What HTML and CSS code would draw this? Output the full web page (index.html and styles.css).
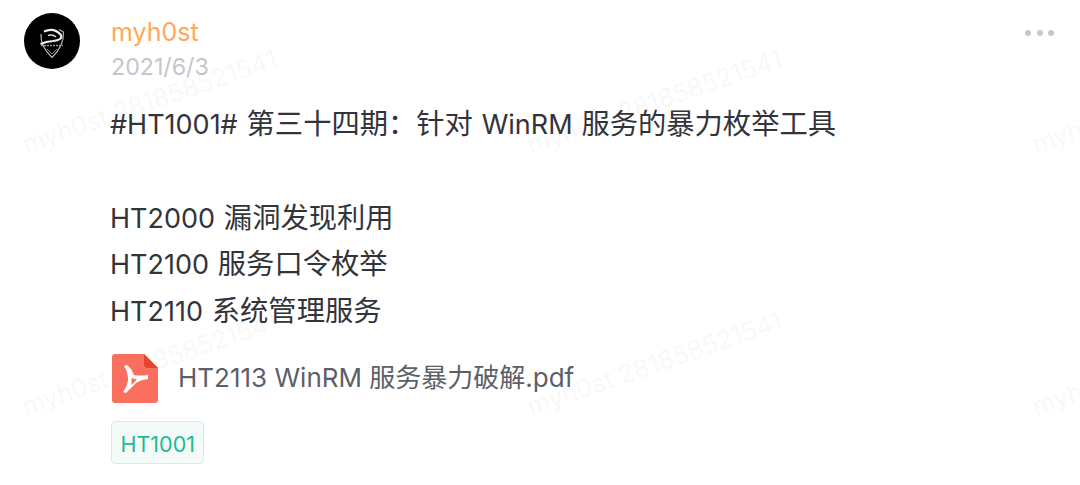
FILE: index.html
```html
<!DOCTYPE html>
<html>
<head lang="en">
    <meta charset="UTF-8">
    <title>myh0st</title>
    <link rel="stylesheet" href="styles.css">
</head>
<body>
    <div class="topic">
        <svg class="avatar" viewBox="0 0 56 56">
            <circle cx="28" cy="28" r="28" fill="#000"/>
            <path d="M17 21 Q16 33 28 44.5 Q40 33 39.5 19 L35 16.5" fill="none" stroke="#b5b5b5" stroke-width="1.2"/>
            <path d="M20 18.5 Q30 14 37 22 Q39 27 29 28 Q22 28.5 16.5 31" fill="none" stroke="#f0f0f0" stroke-width="2"/>
            <path d="M24 22.5 Q29 21 32 24" fill="none" stroke="#ddd" stroke-width="1.6"/>
            <path d="M17 32.5 H39" stroke="#999" stroke-width="1.6" stroke-dasharray="2 1"/>
            <path d="M23 36 L28 41 L33 36" fill="none" stroke="#888" stroke-width="1"/>
        </svg>
        <div class="main">
            <div class="name">myh0st</div>
            <div class="date">2021/6/3</div>
            <div class="content">
                <p>#HT1001# <span class="cn">第三十四期：针对</span> WinRM <span class="cn">服务的暴力枚举工具</span></p>
                <p>&nbsp;</p>
                <p>HT2000 <span class="cn">漏洞发现利用</span></p>
                <p>HT2100 <span class="cn">服务口令枚举</span></p>
                <p>HT2110 <span class="cn">系统管理服务</span></p>
            </div>
            <div class="file">
                <svg class="file-icon" viewBox="0 0 46 49">
                    <path d="M3 0 H32 L46 14 V46 Q46 49 43 49 H3 Q0 49 0 46 V3 Q0 0 3 0 Z" fill="#fb6f5f"/>
                    <path d="M32 0 L46 14 H36 Q32 14 32 10 Z" fill="#e5452f"/>
                    <path d="M12 12 L15 11 Q20 15 22 21 Q29 22 36 21 L36 25 Q28 26 24 29 Q19 34 14 39 L11 38 Q16 31 16 25 Q16 18 12 12 Z M19.5 24 L19.5 31 L25 25.5 Z" fill="#fff" fill-rule="evenodd"/>
                </svg>
                <span class="file-name">HT2113 WinRM 服务暴力破解.pdf</span>
            </div>
            <span class="tag">HT1001</span>
        </div>
        <div class="more"><i></i><i></i><i></i></div>
    </div>
    <div class="marks">
        <span>myh0st 281858521541</span>
        <span>myh0st 281858521541</span>
        <span>myh0st 281858521541</span>
        <span>myh0st 281858521541</span>
        <span>myh0st 281858521541</span>
        <span>myh0st 281858521541</span>
    </div>
</body>
</html>
```

FILE: styles.css
```css
* {
    margin: 0;
    padding: 0;
}
html, body {
    height: 100%;
    overflow: hidden;
    background: #fff;
}
body {
    font-family: Inter, "Noto Sans CJK SC", sans-serif;
    position: relative;
}
.topic {
    display: flex;
    padding: 13px 26px 0 24px;
}
.avatar {
    width: 56px;
    height: 56px;
    flex: none;
    margin-right: 31px;
}
.main {
    flex: 1;
}
.name {
    font-size: 25px;
    line-height: 38px;
    color: #ffa858;
}
.date {
    font-size: 23.2px;
    line-height: 30px;
    margin-top: 1px;
    color: #c3c6cc;
}
.content {
    margin-top: 20px;
    margin-left: -1px;
    font-size: 27px;
    word-spacing: 1.2px;
    line-height: 46.8px;
    color: #33343a;
}
.cn {
    font-size: 28.3px;
    line-height: 1;
}
.file {
    display: flex;
    align-items: center;
    margin-top: 18px;
}
.file-icon {
    width: 46px;
    height: 49px;
    margin-left: 1px;
    margin-right: 20px;
}
.file-name {
    font-size: 26px;
    padding-bottom: 5px;
    color: #5c5f68;
}
.tag {
    display: inline-block;
    margin-top: 18px;
    padding: 0 8.5px;
    height: 41px;
    line-height: 44px;
    font-size: 21.5px;
    color: #1fbb95;
    background: #f4faf8;
    border: 1px solid #d3eee6;
    border-radius: 4px;
}
.more {
    display: flex;
    gap: 5.5px;
    margin-top: 17px;
    height: 6px;
}
.more i {
    width: 6px;
    height: 6px;
    border-radius: 50%;
    background: #c6c8cd;
}
.marks {
    position: absolute;
    left: 0;
    top: 0;
    width: 1515px;
    display: grid;
    grid-template-columns: repeat(3, 505px);
    grid-auto-rows: 262px;
    pointer-events: none;
}
.marks span {
    font-size: 25.4px;
    line-height: 32px;
    height: 32px;
    color: rgba(60, 60, 70, 0.055);
    white-space: nowrap;
    transform-origin: 0 0;
    transform: translate(18px, 130px) rotate(-19deg);
}
```
